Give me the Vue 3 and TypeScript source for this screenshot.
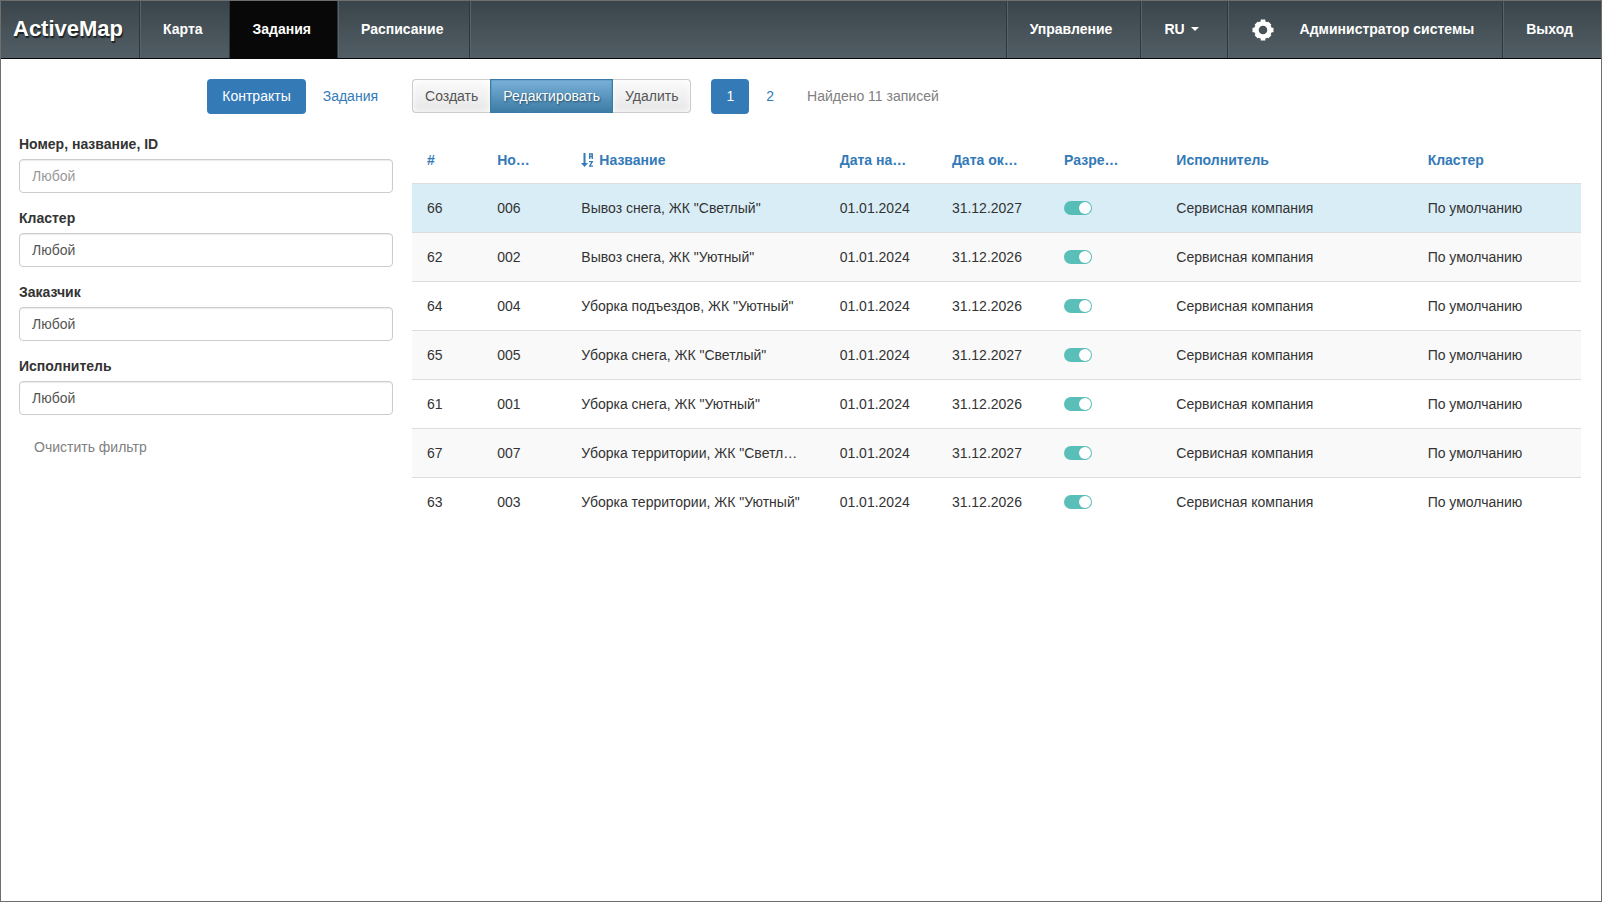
<script setup lang="ts">
import { ref } from 'vue'

interface Contract {
  id: number
  number: string
  title: string
  start: string
  end: string
  enabled: boolean
  executor: string
  cluster: string
}

interface Column {
  key: string
  label: string
  sorted?: boolean
}

const columns: Column[] = [
  { key: 'id', label: '#' },
  { key: 'number', label: 'Но…' },
  { key: 'title', label: 'Название', sorted: true },
  { key: 'start', label: 'Дата на…' },
  { key: 'end', label: 'Дата ок…' },
  { key: 'enabled', label: 'Разре…' },
  { key: 'executor', label: 'Исполнитель' },
  { key: 'cluster', label: 'Кластер' },
]

const makeContract = (id: number, number: string, title: string, year: number): Contract => ({
  id,
  number,
  title,
  start: '01.01.2024',
  end: `31.12.${year}`,
  enabled: true,
  executor: 'Сервисная компания',
  cluster: 'По умолчанию',
})

const contracts = ref<Contract[]>([
  makeContract(66, '006', 'Вывоз снега, ЖК "Светлый"', 2027),
  makeContract(62, '002', 'Вывоз снега, ЖК "Уютный"', 2026),
  makeContract(64, '004', 'Уборка подъездов, ЖК "Уютный"', 2026),
  makeContract(65, '005', 'Уборка снега, ЖК "Светлый"', 2027),
  makeContract(61, '001', 'Уборка снега, ЖК "Уютный"', 2026),
  makeContract(67, '007', 'Уборка территории, ЖК "Светл…', 2027),
  makeContract(63, '003', 'Уборка территории, ЖК "Уютный"', 2026),
])

const selectedId = ref(66)
const query = ref('')
const selects = [
  { id: 'filter-cluster', label: 'Кластер' },
  { id: 'filter-customer', label: 'Заказчик' },
  { id: 'filter-executor', label: 'Исполнитель' },
]
</script>

<template>
  <div class="page">
    <header class="navbar">
      <a class="brand" href="#">ActiveMap</a>
      <nav class="nav">
        <a class="nav-item" href="#">Карта</a>
        <a class="nav-item active" href="#">Задания</a>
        <a class="nav-item" href="#">Расписание</a>
      </nav>
      <nav class="nav nav-right">
        <a class="nav-item" href="#">Управление</a>
        <button class="nav-item" type="button">RU<span class="caret"></span></button>
        <a class="nav-item user" href="#">
          <svg class="gear" viewBox="0 0 22 22" aria-hidden="true">
            <circle cx="11" cy="11" r="6.600" stroke-width="4.600" />
            <path
              stroke-width="4.600"
              d="M11 .5v5M11 16.500v5M.5 11h5M16.500 11h5M4.200 4.200l3 3M14.800 14.800l3 3M17.800 4.200l-3 3M7.200 14.800l-3 3"
            />
          </svg>
          Администратор системы
        </a>
        <a class="nav-item" href="#">Выход</a>
      </nav>
    </header>

    <main class="content">
      <aside>
        <nav class="pills">
          <a class="pill active" href="#">Контракты</a>
          <a class="pill" href="#">Задания</a>
        </nav>
        <form class="filters" @submit.prevent>
          <div class="field">
            <label for="filter-query">Номер, название, ID</label>
            <input id="filter-query" v-model="query" class="control" type="text" placeholder="Любой" />
          </div>
          <div v-for="item in selects" :key="item.id" class="field">
            <label :for="item.id">{{ item.label }}</label>
            <select :id="item.id" class="control">
              <option>Любой</option>
            </select>
          </div>
          <button class="clear" type="reset">Очистить фильтр</button>
        </form>
      </aside>

      <section>
        <div class="toolbar">
          <div class="btn-group">
            <button class="btn" type="button">Создать</button>
            <button class="btn primary" type="button">Редактировать</button>
            <button class="btn" type="button">Удалить</button>
          </div>
          <nav class="pager">
            <a class="pill active" href="#">1</a>
            <a class="pill" href="#">2</a>
          </nav>
          <span class="found">Найдено 11 записей</span>
        </div>

        <table class="grid">
          <colgroup>
            <col v-for="column in columns" :key="column.key" :class="`col-${column.key}`" />
          </colgroup>
          <thead>
            <tr>
              <th v-for="column in columns" :key="column.key" scope="col">
                <a href="#">
                  <svg v-if="column.sorted" class="sort-icon" viewBox="0 0 14 14" aria-hidden="true">
                    <path class="fill" d="M2.500 0h2v10H7l-3.500 4L0 10h2.500z" />
                    <path class="line" d="M8.700 6V1h2.600v5M8.700 3.500h2.600M8 8.700h3.300L8.700 13.200h3.300" />
                  </svg>{{ column.label }}
                </a>
              </th>
            </tr>
          </thead>
          <tbody>
            <tr
              v-for="row in contracts"
              :key="row.id"
              :class="{ selected: row.id === selectedId }"
              @click="selectedId = row.id"
            >
              <td>{{ row.id }}</td>
              <td>{{ row.number }}</td>
              <td>{{ row.title }}</td>
              <td>{{ row.start }}</td>
              <td>{{ row.end }}</td>
              <td>
                <input v-model="row.enabled" class="switch" type="checkbox" role="switch" :aria-label="row.title" />
              </td>
              <td>{{ row.executor }}</td>
              <td>{{ row.cluster }}</td>
            </tr>
          </tbody>
        </table>
      </section>
    </main>
  </div>
</template>

<style>
body {
  margin: 0;
  background: #fff;
}
</style>

<style scoped>
.page,
.page * {
  box-sizing: border-box;
}

.page {
  min-height: 100vh;
  border: 1px solid #6e6e6e;
  background: #fff;
  color: #333;
  font-family: 'Liberation Sans', Arial, sans-serif;
  font-size: 14px;
  line-height: 20px;
}

a {
  color: #337ab7;
  text-decoration: none;
}

button,
input,
select {
  margin: 0;
  font: inherit;
}

.navbar {
  display: flex;
  height: 58px;
  border-bottom: 1px solid #050505;
  background: linear-gradient(#3a454b, #525e65);
}

.brand {
  display: flex;
  align-items: center;
  padding: 0 16px 2px 12px;
  border-right: 1px solid #2e373c;
  color: #fff;
  font-size: 22px;
  font-weight: bold;
  text-shadow: 1px 2px 1px #1b2124;
}

.nav {
  display: flex;
}

.nav-right {
  margin-left: auto;
  border-left: 1px solid #2e373c;
}

.nav-item {
  display: flex;
  align-items: center;
  padding: 0 26px 2px 22px;
  border: 0 solid;
  border-width: 0 1px;
  border-color: transparent #2e373c transparent #56636a;
  background: none;
  color: #fff;
  font-size: 14px;
  font-weight: bold;
}

.nav > .nav-item.active {
  border-left-color: #080808;
  background: #080808;
}

.nav-right > .nav-item {
  padding-right: 28px;
}

.nav-right > .nav-item:last-child {
  border-right: 0;
}

.nav:not(.nav-right) {
  border-right: 1px solid #56636a;
}

.caret {
  margin-left: 6px;
  border: 4px solid transparent;
  border-top-color: #fff;
  border-bottom: 0;
}

.gear {
  width: 22px;
  height: 22px;
  margin: 2px 26px 0 1px;
  overflow: visible;
  fill: none;
  stroke: #fff;
}

.content {
  display: grid;
  grid-template-columns: minmax(0, 24fr) minmax(0, 75fr);
  gap: 19px;
  padding: 20px 20px 20px 18px;
}

.pills {
  display: flex;
  justify-content: flex-end;
  gap: 2px;
  margin-bottom: 20px;
}

.pill {
  padding: 7px 15px 8px;
  border-radius: 4px;
}

.pill.active {
  background: #337ab7;
  color: #fff;
}

.field {
  margin-bottom: 15px;
}

.field label {
  display: block;
  margin-bottom: 5px;
  font-weight: bold;
}

.control {
  display: block;
  width: 100%;
  height: 34px;
  padding: 6px 12px;
  border: 1px solid #ccc;
  border-radius: 4px;
  background: #fff;
  box-shadow: inset 0 1px 1px rgba(0, 0, 0, 0.08);
  color: #555;
  appearance: none;
}

.control::placeholder {
  color: #999;
}

.clear {
  padding: 7px 15px;
  border: 0;
  background: none;
  color: #808080;
}

.toolbar {
  display: flex;
  align-items: flex-start;
  height: 35px;
  margin-bottom: 20px;
}

.btn-group {
  display: flex;
}

.btn {
  padding: 6px 12px;
  border: 1px solid #ccc;
  background: linear-gradient(#fbfbfb, #e6e6e6);
  box-shadow: inset 0 0 6px #fff;
  color: #555;
}

.btn:first-child {
  border-right: 0;
  border-radius: 4px 0 0 4px;
}

.btn:last-child {
  border-left: 0;
  border-radius: 0 4px 4px 0;
}

.btn.primary {
  border-color: #3a7ca6;
  background: linear-gradient(#79b1d9, #3d7ca5);
  box-shadow: inset 0 0 2px #4683ab;
  color: #fff;
  text-shadow: 1px 1px 2px #234a63;
}

.pager {
  display: flex;
  gap: 2px;
  margin-left: 20px;
}

.found {
  margin-left: 18px;
  padding-top: 7px;
  color: #808080;
}

.grid {
  width: 100%;
  border-collapse: separate;
  border-spacing: 0;
  table-layout: fixed;
}

.col-id {
  width: 6%;
}

.col-number {
  width: 7.2%;
}

.col-title {
  width: 22.1%;
}

.col-start,
.col-end,
.col-enabled {
  width: 9.6%;
}

.col-executor {
  width: 21.5%;
}

.col-cluster {
  width: 14.4%;
}

th,
td {
  height: 49px;
  padding: 0 15px;
  text-align: left;
  white-space: nowrap;
}

th {
  padding-top: 2px;
}

td {
  border-top: 1px solid #ddd;
  overflow: hidden;
  text-overflow: ellipsis;
}

.sort-icon {
  width: 14px;
  height: 14px;
  margin-right: 4px;
  vertical-align: -2px;
}

.sort-icon .fill {
  fill: #337ab7;
}

.sort-icon .line {
  fill: none;
  stroke: #337ab7;
  stroke-width: 1.3;
}

tbody tr:nth-child(even) {
  background: #f9f9f9;
}

tbody tr.selected {
  background: #d9edf7;
}

.switch {
  display: block;
  width: 28px;
  height: 14px;
  padding: 1px;
  border-radius: 7px;
  background: #ccc;
  opacity: 0.9;
  appearance: none;
}

.switch::before {
  display: block;
  width: 12px;
  height: 12px;
  border-radius: 50%;
  background: #fff;
  content: '';
}

.switch:checked {
  background: #49b9b1;
}

.switch:checked::before {
  margin-left: auto;
}
</style>
